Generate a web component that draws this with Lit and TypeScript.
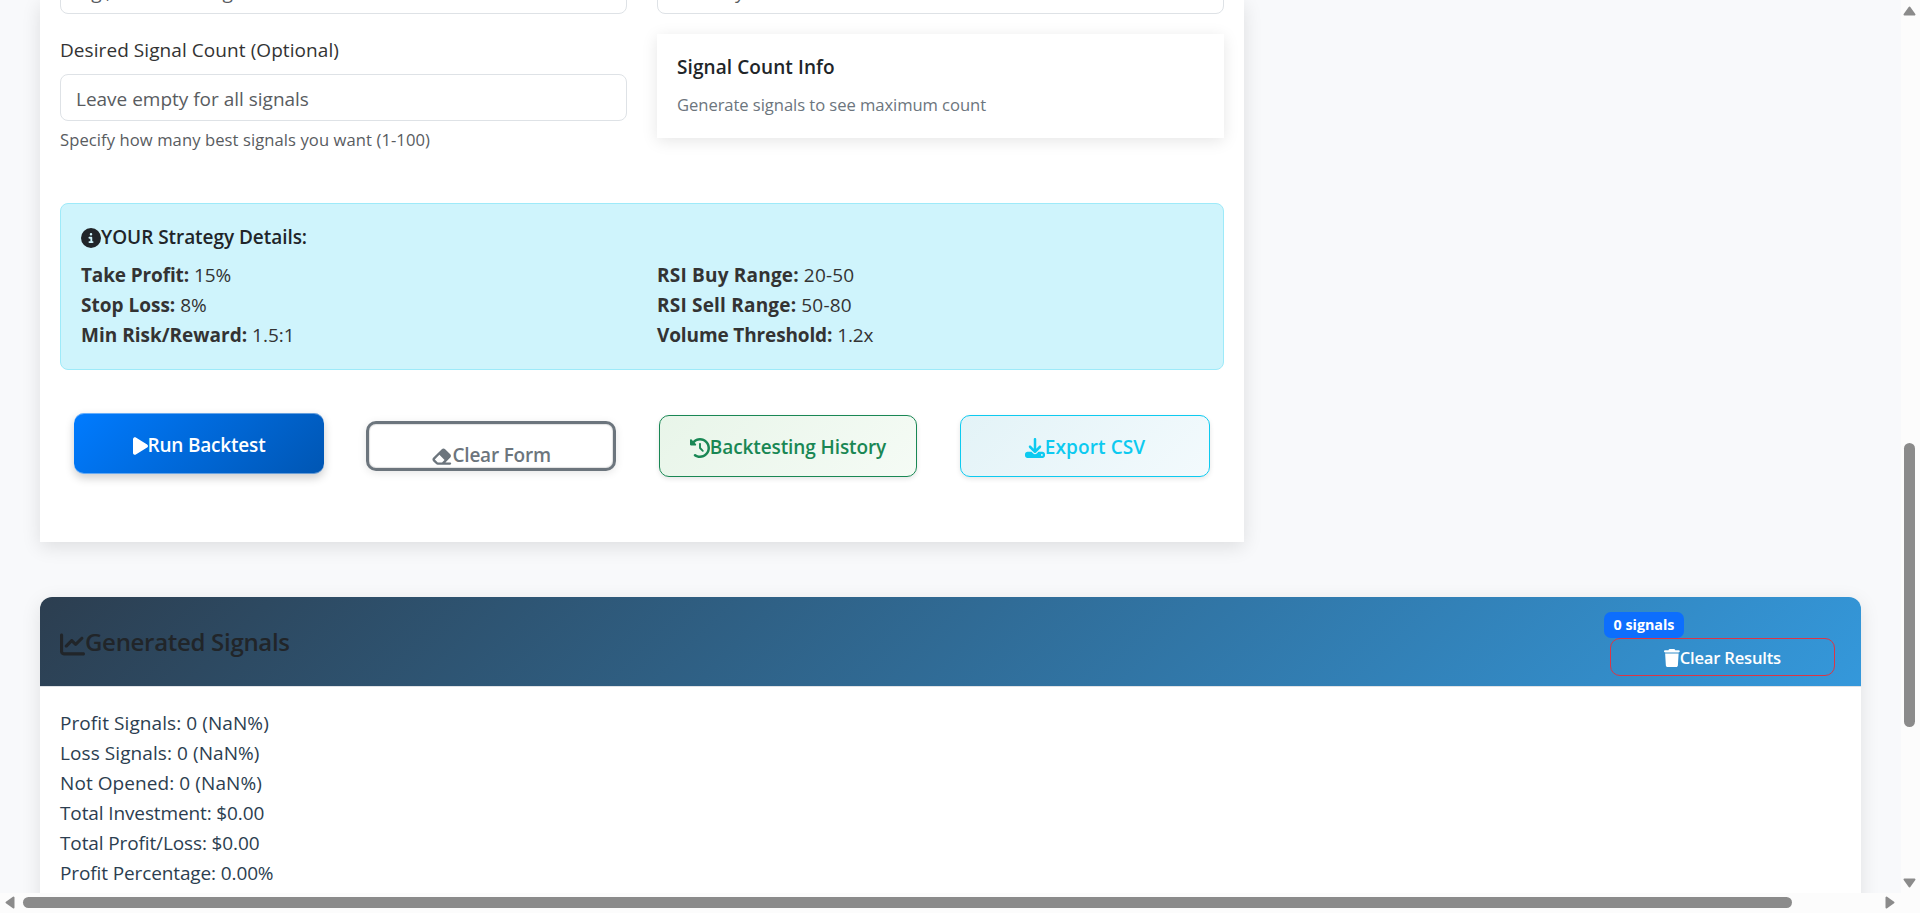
import { LitElement, html, css } from "lit";
import { customElement } from "lit/decorators.js";

const ICONS: Record<string, [number, string]> = {
  info: [512, "M256 512A256 256 0 1 0 256 0a256 256 0 1 0 0 512zM216 336h24V272H216c-13.3 0-24-10.7-24-24s10.7-24 24-24h48c13.3 0 24 10.7 24 24v88h8c13.3 0 24 10.7 24 24s-10.7 24-24 24H216c-13.3 0-24-10.7-24-24s10.7-24 24-24zm40-208a32 32 0 1 1 0 64 32 32 0 1 1 0-64z"],
  play: [384, "M73 39c-14.8-9.1-33.4-9.4-48.5-.9S0 62.6 0 80V432c0 17.4 9.4 33.4 24.5 41.9s33.7 8.1 48.5-.9L361 297c14.3-8.7 23-24.2 23-41s-8.7-32.2-23-41L73 39z"],
  eraser: [576, "M290.7 57.4L57.4 290.7c-25 25-25 65.5 0 90.5l80 80c12 12 28.3 18.7 45.3 18.7H288h9.4H512c17.7 0 32-14.3 32-32s-14.3-32-32-32H387.9L518.6 285.3c25-25 25-65.5 0-90.5L381.3 57.4c-25-25-65.5-25-90.5 0zM297.4 416H288l-105.4 0-80-80L227.3 211.3 364.7 348.7 297.4 416z"],
  history: [512, "M75 75L41 41C25.9 25.9 0 36.6 0 57.9V168c0 13.3 10.7 24 24 24H134.1c21.4 0 32.1-25.9 17-41l-30.8-30.8C155 85.5 203 64 256 64c106 0 192 86 192 192s-86 192-192 192c-40.8 0-78.6-12.7-109.7-34.4c-14.5-10.1-34.4-6.6-44.6 7.9s-6.6 34.4 7.9 44.6C151.2 495 201.7 512 256 512c141.4 0 256-114.6 256-256S397.4 0 256 0C185.3 0 121.3 28.7 75 75zm181 53c-13.3 0-24 10.7-24 24V256c0 6.4 2.5 12.5 7 17l72 72c9.4 9.4 24.6 9.4 33.9 0s9.4-24.6 0-33.9l-65-65V152c0-13.3-10.7-24-24-24z"],
  download: [512, "M288 32c0-17.7-14.3-32-32-32s-32 14.3-32 32V274.7l-73.4-73.4c-12.5-12.5-32.8-12.5-45.3 0s-12.5 32.8 0 45.3l128 128c12.5 12.5 32.8 12.5 45.3 0l128-128c12.5-12.5 12.5-32.8 0-45.3s-32.8-12.5-45.3 0L288 274.7V32zM64 352c-35.3 0-64 28.7-64 64v32c0 35.3 28.7 64 64 64H448c35.3 0 64-28.7 64-64V416c0-35.3-28.7-64-64-64H346.5l-45.3 45.3c-25 25-65.5 25-90.5 0L165.5 352H64zm368 56a24 24 0 1 1 0 48 24 24 0 1 1 0-48z"],
  chart: [512, "M64 64c0-17.7-14.3-32-32-32S0 46.3 0 64V400c0 44.2 35.8 80 80 80H480c17.7 0 32-14.3 32-32s-14.3-32-32-32H80c-8.8 0-16-7.2-16-16V64zm406.6 86.6c12.5-12.5 12.5-32.8 0-45.3s-32.8-12.5-45.3 0L320 210.7l-57.4-57.4c-12.5-12.5-32.8-12.5-45.3 0l-112 112c-12.5 12.5-12.5 32.8 0 45.3s32.8 12.5 45.3 0L240 221.3l57.4 57.4c12.5 12.5 32.8 12.5 45.3 0l128-128z"],
  trash: [448, "M135.2 17.7L128 32H32C14.3 32 0 46.3 0 64S14.3 96 32 96H416c17.7 0 32-14.3 32-32s-14.3-32-32-32H320l-7.2-14.3C307.4 6.8 296.3 0 284.2 0H163.8c-12.1 0-23.2 6.8-28.6 17.7zM416 128H32L53.2 467c1.6 25.3 22.6 45 47.9 45H346.9c25.3 0 46.3-19.7 47.9-45L416 128z"],
};

const icon = (name: string, size = 20) => {
  const [w, d] = ICONS[name];
  return html`<svg class="icon" width=${(size * w) / 512} height=${size} viewBox="0 0 ${w} 512"><path fill="currentColor" d=${d}></path></svg>`;
};

@customElement("app-root")
export class AppRoot extends LitElement {
  static styles = css`
    :host { display: block; }
    * { box-sizing: border-box; }
    .window {
      display: grid; grid-template-columns: 1fr 19px; grid-template-rows: 893px 20px;
      width: 1920px; height: 913px; overflow: hidden;
      font: 400 19px/30px "Open Sans", "Noto Sans", sans-serif; color: #333;
    }
    .page { overflow: hidden; background: #f8f9fb; display: flex; flex-direction: column; }
    .form {
      flex: none; margin-left: 40px; width: 1204px; height: 542px; padding: 0 20px;
      display: flex; flex-direction: column; background: #fff;
      box-shadow: 0 5px 18px rgba(0, 0, 0, .11);
    }
    .cols { display: grid; grid-template-columns: 567px 567px; column-gap: 30px; flex: none; }
    .cut { margin-top: -33px; }
    .field {
      height: 47px; border: 1px solid #dee2e6; border-radius: 8px; background: #fff;
      padding: 9px 15px 6px; color: #595c5f; letter-spacing: -.01px;
    }
    .cut .field { letter-spacing: -.25px; }
    .label { margin-top: 21px; margin-bottom: 9px; height: 30px; letter-spacing: .07px; }
    .help { margin-top: 6px; font-size: 16.6px; line-height: 26px; color: #595c5f; letter-spacing: .077px; }
    .info {
      margin-top: 20px; height: 104px; padding: 21px 20px; background: #fff;
      box-shadow: 0 3px 15px rgba(0, 0, 0, .1);
    }
    .info-title { line-height: 24px; font-weight: 600; color: #212529; letter-spacing: .09px; }
    .info-text { margin-top: 13px; font-size: 16.6px; line-height: 26px; color: #6c757d; letter-spacing: -.061px; }
    .alert {
      margin-top: 50px; height: 167px; padding: 19px 20px; border: 1px solid #9eeaf9;
      border-radius: 8px; background: #cff4fc; flex: none;
    }
    .alert-title { height: 36px; line-height: 29px; font-weight: 600; color: #212529; letter-spacing: -.05px; }
    .pairs { display: grid; grid-template-columns: 576px 1fr; line-height: 30px; padding-top: 1px; }
    .pairs b { letter-spacing: 0; }
    .pairs .tight { letter-spacing: -.13px; }
    .pairs .wide { letter-spacing: .2px; }
    .icon { vertical-align: -.2em; display: inline-block; }
    .actions { display: flex; align-items: flex-start; padding: 43px 14px 0; flex: none; }
    .btn {
      border-radius: 10px; text-align: center; font-weight: 600; white-space: nowrap; line-height: 30px;
      border: 1px solid transparent; overflow: hidden; letter-spacing: -.2px; flex: none;
    }
    .run {
      width: 250px; height: 61px; padding-top: 17px; border: 0; color: #fff;
      background: linear-gradient(135deg, #007bff, #0056b3);
      box-shadow: 0 4px 10px rgba(0, 0, 0, .2), inset 0 1px rgba(255, 255, 255, .4), inset 0 -1px rgba(255, 255, 255, .4);
    }
    .clear {
      width: 250px; height: 50px; margin: 8px 0 0 42px; padding-top: 16px; border: 3px solid #6c757d;
      color: #6c757d; background: #fff; box-shadow: 0 2px 8px rgba(0, 0, 0, .1), inset 0 0 1px 1px rgba(0, 0, 0, .12);
    }
    .hist {
      width: 258px; height: 62px; margin: 2px 0 0 43px; padding-top: 16px; letter-spacing: -.1px;
      border-color: #198754; color: #198754; background: linear-gradient(135deg, #e8f5e9, #f5fbf5);
      box-shadow: 0 2px 5px rgba(0, 0, 0, .1);
    }
    .export {
      width: 250px; height: 62px; margin: 2px 0 0 43px; padding-top: 16px; letter-spacing: .12px;
      border-color: #0dcaf0; color: #0dcaf0; background: linear-gradient(135deg, #e3f3f7, #f3fafd);
      box-shadow: 0 2px 5px rgba(0, 0, 0, .1);
    }
    .results {
      flex: none; margin: 55px 0 0 40px; width: 1821px; height: 340px; border-radius: 12px 12px 0 0;
      background: #fff; box-shadow: 0 5px 20px rgba(0, 0, 0, .1);
    }
    .head {
      height: 90px; padding: 0 26px 0 20px; display: flex; justify-content: space-between;
      border-radius: 12px 12px 0 0; border-bottom: 1px solid #dfe2e6;
      background: linear-gradient(135deg, #2c3e50, #3498db) border-box;
    }
    .head-title { padding-top: 29px; font-size: 24px; line-height: 32px; font-weight: 600; color: #212529; letter-spacing: -.3px; }
    .head-title .icon { vertical-align: -6px; }
    .tools { padding-top: 15px; width: 231px; display: flex; flex-direction: column; }
    .badge {
      width: 80px; height: 26px; border-radius: 7px; background: #0d6efd; color: #fff; text-align: center;
      font-size: 14.3px; line-height: 26px; font-weight: 700;
    }
    .reset {
      width: 225px; height: 38px; margin-left: 6px; padding-top: 5px; border-color: #dc3545; color: #fff;
      font-size: 16.6px; line-height: 28px;
    }
    .stats { padding: 21px 20px; color: #2c3e50; }
    .stat { letter-spacing: .08px; }
    .money { letter-spacing: -.12px; }
    .bar { background: #fcfcfc; display: flex; align-items: center; }
    .vert { flex-direction: column; padding: 6px 2px 5px 0; }
    .horz { padding: 0 5px 1px; }
    .thumb { background: #8b8b8b; border-radius: 6px; }
    .vert .thumb { width: 11px; height: 284px; margin-top: 427px; margin-bottom: 151px; flex: none; }
    .horz .thumb { height: 11px; width: 1769px; margin-left: 8px; margin-right: 93px; flex: none; }
    .arrow { fill: #8b8b8b; stroke: #8b8b8b; stroke-width: 2; stroke-linejoin: round; flex: none; }
    .corner { background: #fcfcfc; }
  `;

  private pair(label: string, value: string, spacing = "") {
    return html`<div><b class=${spacing}>${label}</b> <span class=${spacing}>${value}</span></div>`;
  }

  render() {
    return html`
      <div class="window">
        <div class="page">
          <section class="form">
            <div class="cols cut">
              <div class="field">e.g., Trend trading</div>
              <div class="field">Monthly</div>
            </div>
            <div class="cols">
              <div>
                <div class="label">Desired Signal Count (Optional)</div>
                <div class="field">Leave empty for all signals</div>
                <div class="help">Specify how many best signals you want (1-100)</div>
              </div>
              <div class="info">
                <div class="info-title">Signal Count Info</div>
                <div class="info-text">Generate signals to see maximum count</div>
              </div>
            </div>
            <div class="alert">
              <div class="alert-title">${icon("info")}YOUR Strategy Details:</div>
              <div class="pairs">
                <div>
                  ${this.pair("Take Profit:", "15%", "tight")}
                  ${this.pair("Stop Loss:", "8%")}
                  ${this.pair("Min Risk/Reward:", "1.5:1")}
                </div>
                <div>
                  ${this.pair("RSI Buy Range:", "20-50", "wide")}
                  ${this.pair("RSI Sell Range:", "50-80", "wide")}
                  ${this.pair("Volume Threshold:", "1.2x", "tight")}
                </div>
              </div>
            </div>
            <div class="actions">
              <div class="btn run">${icon("play")}Run Backtest</div>
              <div class="btn clear">${icon("eraser", 19)}Clear Form</div>
              <div class="btn hist">${icon("history")}Backtesting History</div>
              <div class="btn export">${icon("download")}Export CSV</div>
            </div>
          </section>
          <section class="results">
            <div class="head">
              <div class="head-title">${icon("chart", 25)}Generated Signals</div>
              <div class="tools">
                <div class="badge">0 signals</div>
                <div class="btn reset">${icon("trash", 18)}Clear Results</div>
              </div>
            </div>
            <div class="stats">
              <div class="stat">Profit Signals: 0 (NaN%)</div>
              <div class="stat">Loss Signals: 0 (NaN%)</div>
              <div class="stat">Not Opened: 0 (NaN%)</div>
              <div class="stat money">Total Investment: $0.00</div>
              <div class="stat money">Total Profit/Loss: $0.00</div>
              <div class="stat money">Profit Percentage: 0.00%</div>
            </div>
          </section>
        </div>
        <div class="bar vert">
          <svg class="arrow" width="13" height="10"><path d="M6.5 1.5L11.5 8.5H1.5Z"></path></svg>
          <div class="thumb"></div>
          <svg class="arrow" width="13" height="10"><path d="M6.5 8.5L11.5 1.5H1.5Z"></path></svg>
        </div>
        <div class="bar horz">
          <svg class="arrow" width="10" height="13"><path d="M1.5 6.5L8.5 1.5V11.5Z"></path></svg>
          <div class="thumb"></div>
          <svg class="arrow" width="10" height="13"><path d="M8.5 6.5L1.5 1.5V11.5Z"></path></svg>
        </div>
        <div class="corner"></div>
      </div>
    `;
  }
}
